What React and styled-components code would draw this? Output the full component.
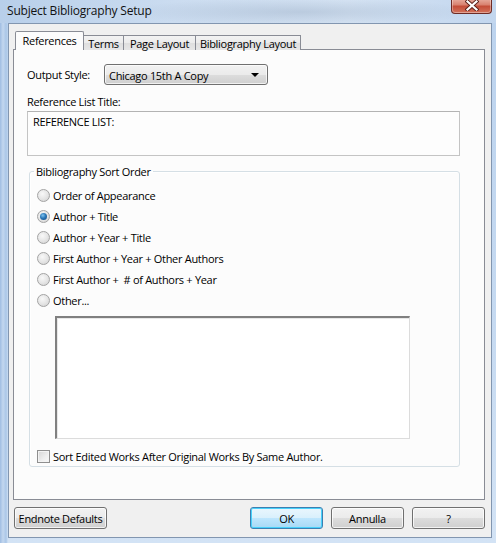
import React from "react";
import styled, { createGlobalStyle, css } from "styled-components";

const Global = createGlobalStyle`
  html, body { margin: 0; padding: 0; background: #c9dcf1; }
  body { font-family: "Segoe UI", "Open Sans", "Noto Sans", sans-serif; font-size: 11px; color: #000; }
  * { box-sizing: border-box; }
`;

const Window = styled.div`
  width: 496px;
  height: 543px;
  display: flex;
  flex-direction: column;
  padding: 0 4px 5px 8px;
  letter-spacing: -0.3px;
  background:
    linear-gradient(90deg, #9fbde2 0px, #c3d7ef 3px, #aac6e7 6px, rgba(170,198,231,0) 8px),
    linear-gradient(180deg, #bcd3ee 0%, #c6daf1 60%, #d3e3f5 100%);
  overflow: hidden;
`;

const TitleBar = styled.div`
  height: 23px;
  margin: 0 -4px 0 -8px;
  padding: 0 4px 0 7px;
  display: flex;
  align-items: flex-start;
  justify-content: space-between;
  background:
    radial-gradient(ellipse 180px 14px at 300px 12px, rgba(140,160,185,0.35), rgba(140,160,185,0) 100%),
    linear-gradient(90deg, #b8cfea 0%, #cbdcf0 35%, #d6e4f4 70%, #c2d6ee 100%);
`;

const Title = styled.div`
  font-size: 12px;
  line-height: 21px;
  color: #111;
  letter-spacing: -0.2px;
`;

const CloseButton = styled.div`
  width: 41px;
  height: 16px;
  margin-top: -2px;
  border: 1px solid #6e2b25;
  border-top: none;
  border-radius: 0 0 4px 4px;
  background: linear-gradient(180deg, #eab3a6 0%, #d98270 45%, #c44d38 55%, #d3735c 100%);
  box-shadow: inset 0 0 0 1px rgba(255,255,255,0.35);
  display: flex;
  align-items: center;
  justify-content: center;
`;

const Client = styled.div`
  flex: 1;
  background: #f0f0f0;
  border: 1px solid #8296b0;
  display: flex;
  flex-direction: column;
  padding: 7px 6px 0 4px;
`;

const TabStrip = styled.div`
  display: flex;
  align-items: flex-end;
  padding-left: 2px;
  height: 19px;
  position: relative;
  z-index: 1;
  margin-bottom: -1px;
`;

const Tab = styled.div`
  width: ${(p) => p.$w}px;
  height: ${(p) => (p.$active ? 19 : 15)}px;
  border: 1px solid #898c95;
  border-bottom: none;
  margin-left: -1px;
  &:first-child { margin-left: 0; }
  display: flex;
  align-items: center;
  justify-content: center;
  font-size: 11px;
  line-height: 13px;
  ${(p) =>
    p.$active
      ? css`
          background: #fcfcfc;
          border-radius: 2px 2px 0 0;
          padding-bottom: 2px;
          position: relative;
          z-index: 2;
        `
      : css`
          background: linear-gradient(180deg, #f3f3f3 0%, #ebebeb 50%, #dedede 51%, #e6e6e6 100%);
          padding-top: 1px;
        `}
`;

const Panel = styled.div`
  height: 451px;
  width: 472px;
  border: 1px solid #898c95;
  background: #fcfcfc;
  display: flex;
  flex-direction: column;
  padding: 14px 24px 0 13px;
`;

const FieldRow = styled.div`
  display: flex;
  align-items: center;
  height: 21px;
`;

const Label = styled.div`
  width: ${(p) => p.$w || "auto"};
  font-size: 11px;
  line-height: 15px;
`;

const Combo = styled.div`
  width: 164px;
  height: 21px;
  border: 1px solid #707070;
  border-radius: 3px;
  background: linear-gradient(180deg, #f2f2f2 0%, #ebebeb 50%, #dddddd 51%, #cfcfcf 100%);
  box-shadow: inset 0 0 0 1px rgba(255,255,255,0.7);
  display: flex;
  align-items: center;
  justify-content: space-between;
  padding: 1px 8px 0 4px;
  font-size: 11px;
`;

const Arrow = styled.div`
  width: 0;
  height: 0;
  border-left: 4px solid transparent;
  border-right: 4px solid transparent;
  border-top: 4px solid #000;
`;

const SectionLabel = styled.div`
  margin-top: 9px;
  font-size: 11px;
  line-height: 16px;
`;

const TitleBox = styled.div`
  margin-top: 1px;
  width: 433px;
  height: 45px;
  border: 1px solid #c4c4c4;
  border-top-color: #b3b3b3;
  background: #fdfdfd;
  padding: 3px 5px;
  font-size: 11px;
  line-height: 14px;
`;

const Group = styled.fieldset`
  margin: 8px 0 0 2px;
  width: 431px;
  height: 303px;
  border: 1px solid #d5dfe5;
  border-radius: 3px;
  padding: 6px 0 0 7px;
  display: flex;
  flex-direction: column;
  box-shadow: 1px 1px 0 #fff inset;
`;

const Legend = styled.legend`
  margin-left: -3px;
  padding: 0 2px;
  font-size: 11px;
  line-height: 15px;
`;

const OptionRow = styled.div`
  display: flex;
  align-items: center;
  height: 21px;
  gap: 3px;
  font-size: 11px;
  white-space: pre;
`;

const Radio = styled.div`
  width: 13px;
  height: 13px;
  border-radius: 50%;
  border: 1px solid #a3a3a3;
  background: radial-gradient(circle at 40% 35%, #f8f8f8 0%, #e6e6e6 50%, #cfcfcf 100%);
  display: flex;
  align-items: center;
  justify-content: center;
  flex-shrink: 0;
  &::after {
    content: "";
    display: ${(p) => (p.$checked ? "block" : "none")};
    width: 7px;
    height: 7px;
    border-radius: 50%;
    background: radial-gradient(circle at 40% 35%, #7fc3ef 0%, #2b78b8 45%, #14457d 100%);
  }
`;

const OtherBox = styled.div`
  margin: 5px 0 0 18px;
  width: 355px;
  height: 123px;
  background: #fff;
  border-top: 2px solid #808080;
  border-left: 2px solid #808080;
  border-right: 1px solid #dcdcdc;
  border-bottom: 1px solid #dcdcdc;
  box-shadow: inset 1px 1px 0 #e8e8e8;
`;

const CheckRow = styled.div`
  display: flex;
  align-items: center;
  gap: 3px;
  height: 17px;
  margin-top: 9px;
  font-size: 11px;
`;

const Checkbox = styled.div`
  width: 13px;
  height: 13px;
  border: 1px solid #8f8f8f;
  background: linear-gradient(135deg, #d5d5d5 0%, #eeeeee 60%, #f8f8f8 100%);
  box-shadow: inset 0 0 0 1px #f3f3f3;
  flex-shrink: 0;
`;

const ButtonRow = styled.div`
  display: flex;
  align-items: center;
  margin-top: 7px;
  padding-left: 1px;
  gap: 8px;
`;

const Button = styled.div`
  width: ${(p) => p.$w}px;
  height: 22px;
  border: 1px solid ${(p) => (p.$default ? "#3c7fb1" : "#707070")};
  border-radius: 3px;
  background: ${(p) =>
    p.$default
      ? "linear-gradient(180deg, #eaf6fd 0%, #d9f0fc 50%, #bee6fd 51%, #a7d9f5 100%)"
      : "linear-gradient(180deg, #f2f2f2 0%, #ebebeb 50%, #dddddd 51%, #cfcfcf 100%)"};
  box-shadow: inset 0 0 0 1px ${(p) => (p.$default ? "#48d1fb" : "rgba(255,255,255,0.75)")};
  display: flex;
  align-items: center;
  justify-content: center;
  font-size: 11px;
  padding-top: 1px;
  margin-left: ${(p) => p.$push || 0}px;
`;

const tabs = [
  { label: "References", w: 69, active: true },
  { label: "Terms", w: 41 },
  { label: "Page Layout", w: 73 },
  { label: "Bibliography Layout", w: 106 },
];

const options = [
  "Order of Appearance",
  "Author + Title",
  "Author + Year + Title",
  "First Author + Year + Other Authors",
  "First Author +  # of Authors + Year",
  "Other...",
];

export default function App() {
  return (
    <>
      <Global />
      <Window>
        <TitleBar>
          <Title>Subject Bibliography Setup</Title>
          <CloseButton>
            <svg width="14" height="11" viewBox="0 0 14 11">
              <path d="M2.5 1.5 L11.5 9.5 M11.5 1.5 L2.5 9.5" stroke="#5a2019" strokeWidth="4" strokeLinecap="square" />
              <path d="M2.5 1.5 L11.5 9.5 M11.5 1.5 L2.5 9.5" stroke="#fff" strokeWidth="2.2" strokeLinecap="square" />
            </svg>
          </CloseButton>
        </TitleBar>
        <Client>
          <TabStrip>
            {tabs.map((t) => (
              <Tab key={t.label} $w={t.w} $active={t.active}>
                {t.label}
              </Tab>
            ))}
          </TabStrip>
          <Panel>
            <FieldRow>
              <Label $w="77px">Output Style:</Label>
              <Combo>
                <span>Chicago 15th A Copy</span>
                <Arrow />
              </Combo>
            </FieldRow>
            <SectionLabel>Reference List Title:</SectionLabel>
            <TitleBox>REFERENCE LIST:</TitleBox>
            <Group>
              <Legend>Bibliography Sort Order</Legend>
              {options.map((o, i) => (
                <OptionRow key={o}>
                  <Radio $checked={i === 1} />
                  <span>{o}</span>
                </OptionRow>
              ))}
              <OtherBox />
              <CheckRow>
                <Checkbox />
                <span>Sort Edited Works After Original Works By Same Author.</span>
              </CheckRow>
            </Group>
          </Panel>
          <ButtonRow>
            <Button $w={93}>Endnote Defaults</Button>
            <Button $w={73} $default $push={135}>OK</Button>
            <Button $w={73}>Annulla</Button>
            <Button $w={73}>?</Button>
          </ButtonRow>
        </Client>
      </Window>
    </>
  );
}
